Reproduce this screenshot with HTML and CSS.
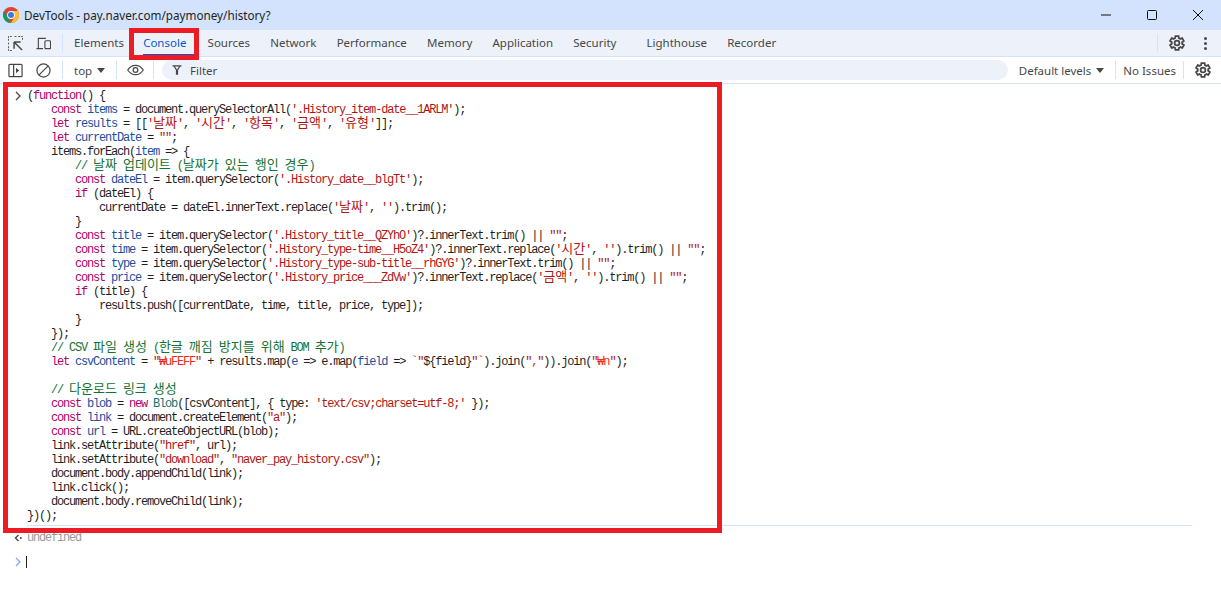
FILE: index.html
```html
<!DOCTYPE html>
<html lang="ko">
<head>
<meta charset="utf-8">
<title>DevTools</title>
<link rel="stylesheet" href="styles.css">
</head>
<body>
<div class="app">
  <header class="titlebar">
    <svg class="logo" viewBox="0 0 16 16"><circle cx="8" cy="8" r="8" fill="#db4437"/><path d="M8 16A8 8 0 0 1 1.07 4l3.46 6L8 16z" fill="#0f9d58"/><path d="M8 16l3.46-6L8 4h6.93A8 8 0 0 1 8 16z" fill="#fbc02d"/><circle cx="8" cy="8" r="3.9" fill="#fff"/><circle cx="8" cy="8" r="3" fill="#3b78e7"/></svg>
    <span class="title">DevTools - pay.naver.com/paymoney/history?</span>
    <div class="winctl">
      <svg viewBox="0 0 10 10"><path d="M0 5h10" stroke="#111" fill="none"/></svg>
      <svg viewBox="0 0 10 10"><rect x=".5" y=".5" width="9" height="9" rx="1" stroke="#111" fill="none"/></svg>
      <svg viewBox="0 0 10 10"><path d="M0 0l10 10M10 0L0 10" stroke="#111" fill="none"/></svg>
    </div>
  </header>

  <nav class="tabbar">
    <span class="ico"><svg viewBox="0 0 16 16" fill="none" stroke="#474747"><path d="M.5 5V.5H5M7 .5h2M11 .5h4.500V5M.5 7v2M.5 11v4.500H5" stroke-dasharray="2 1"/><path d="M6.500 6.500h7M6.500 6.500v7M7 7l8 8" stroke-width="1.600"/></svg></span>
    <span class="ico"><svg viewBox="0 0 16 16" fill="none" stroke="#474747" stroke-width="1.200"><path d="M2.500 13V2.500h8M.5 13.500h7"/><rect x="9.500" y="5" width="6" height="8.500" rx="1"/></svg></span>
    <span class="sep tabsep"></span>
    <span class="tab">Elements</span>
    <span class="tab active">Console</span>
    <span class="tab">Sources</span>
    <span class="tab">Network</span>
    <span class="tab">Performance</span>
    <span class="tab">Memory</span>
    <span class="tab">Application</span>
    <span class="tab wide">Security</span>
    <span class="tab">Lighthouse</span>
    <span class="tab">Recorder</span>
    <span class="grow"></span>
    <span class="sep"></span>
    <span class="ico gearbox"><svg viewBox="3 2 20 20"><path class="gear" d="M19.400 13a7.500 7.500 0 0 0 0-2l2.100-1.600-2-3.500-2.500 1a7.500 7.500 0 0 0-1.700-1L15 3.300h-4l-.4 2.600a7.500 7.500 0 0 0-1.700 1l-2.500-1-2 3.500L6.500 11a7.500 7.500 0 0 0 0 2l-2.100 1.600 2 3.500 2.500-1a7.500 7.500 0 0 0 1.700 1l.4 2.600h4l.4-2.600a7.500 7.500 0 0 0 1.700-1l2.500 1 2-3.500z"/><circle class="gear" cx="13" cy="12" r="3"/></svg></span>
    <span class="dots"><i></i><i></i><i></i></span>
  </nav>

  <div class="toolbar">
    <span class="ico"><svg viewBox="0 0 16 16" fill="none" stroke="#474747" stroke-width="1.300"><rect x="1" y="1.500" width="14" height="13" rx="1"/><path d="M6 1.500v13"/><path d="M8.500 5l3.500 3-3.500 3z" fill="#474747" stroke="none"/></svg></span>
    <span class="ico"><svg viewBox="0 0 16 16" fill="none" stroke="#474747" stroke-width="1.300"><circle cx="8" cy="8" r="7"/><path d="M3 13L13 3"/></svg></span>
    <span class="sep tabsep"></span>
    <span class="ctx">top<b class="caret"></b></span>
    <span class="sep"></span>
    <span class="ico eye"><svg viewBox="0 0 18 12" fill="none" stroke="#474747" stroke-width="1.300"><path d="M.8 6C3 2.500 6 1 9 1s6 1.500 8.200 5C15 9.500 12 11 9 11S3 9.500.8 6z"/><circle cx="9" cy="6" r="2.500"/></svg></span>
    <span class="sep"></span>
    <label class="filter"><svg viewBox="0 0 10 10"><path d="M.5.800h9M2 1l2.500 4v4.200h1V5L8 1" fill="none" stroke="#474747" stroke-width="1.200"/></svg><span>Filter</span></label>
    <span class="levels">Default levels<b class="caret"></b></span>
    <span class="sep"></span>
    <span class="issues">No Issues</span>
    <span class="sep"></span>
    <span class="ico gearbox"><svg viewBox="3 2 20 20"><path class="gear" d="M19.400 13a7.500 7.500 0 0 0 0-2l2.100-1.600-2-3.500-2.500 1a7.500 7.500 0 0 0-1.700-1L15 3.300h-4l-.4 2.600a7.500 7.500 0 0 0-1.700 1l-2.500-1-2 3.500L6.500 11a7.500 7.500 0 0 0 0 2l-2.100 1.600 2 3.500 2.500-1a7.500 7.500 0 0 0 1.700 1l.4 2.600h4l.4-2.600a7.500 7.500 0 0 0 1.700-1l2.500 1 2-3.500z"/><circle class="gear" cx="13" cy="12" r="3"/></svg></span>
  </div>

  <main class="console">
    <div class="msg">
      <svg class="chev" viewBox="0 0 6 10"><path d="M1 1l4 4-4 4" fill="none" stroke="#474747" stroke-width="1.300"/></svg>
      <div class="code"><div class="ln">(<span class="f">function</span>() {</div><div class="ln">    <span class="f">const</span> <span class="v">items</span> = document.querySelectorAll(<span class="s">'.History_item-date__1ARLM'</span>);</div><div class="ln">    <span class="f">let</span> <span class="v">results</span> = [[<span class="s">'<span class="k">날짜</span>'</span>, <span class="s">'<span class="k">시간</span>'</span>, <span class="s">'<span class="k">항목</span>'</span>, <span class="s">'<span class="k">금액</span>'</span>, <span class="s">'<span class="k">유형</span>'</span>]];</div><div class="ln">    <span class="f">let</span> <span class="v">currentDate</span> = <span class="s">""</span>;</div><div class="ln">    items.forEach(<span class="v">item</span> =&gt; {</div><div class="ln">        <span class="c">// <span class="k">날짜</span> <span class="k">업데이트</span> (<span class="k">날짜가</span> <span class="k">있는</span> <span class="k">행인</span> <span class="k">경우</span>)</span></div><div class="ln">        <span class="f">const</span> <span class="v">dateEl</span> = item.querySelector(<span class="s">'.History_date__blgTt'</span>);</div><div class="ln">        <span class="f">if</span> (dateEl) {</div><div class="ln">            currentDate = dateEl.innerText.replace(<span class="s">'<span class="k">날짜</span>'</span>, <span class="s">''</span>).trim();</div><div class="ln">        }</div><div class="ln">        <span class="f">const</span> <span class="v">title</span> = item.querySelector(<span class="s">'.History_title__QZYhO'</span>)?.innerText.trim() || <span class="s">""</span>;</div><div class="ln">        <span class="f">const</span> <span class="v">time</span> = item.querySelector(<span class="s">'.History_type-time__H5oZ4'</span>)?.innerText.replace(<span class="s">'<span class="k">시간</span>'</span>, <span class="s">''</span>).trim() || <span class="s">""</span>;</div><div class="ln">        <span class="f">const</span> <span class="v">type</span> = item.querySelector(<span class="s">'.History_type-sub-title__rhGYG'</span>)?.innerText.trim() || <span class="s">""</span>;</div><div class="ln">        <span class="f">const</span> <span class="v">price</span> = item.querySelector(<span class="s">'.History_price___ZdVw'</span>)?.innerText.replace(<span class="s">'<span class="k">금액</span>'</span>, <span class="s">''</span>).trim() || <span class="s">""</span>;</div><div class="ln">        <span class="f">if</span> (title) {</div><div class="ln">            results.push([currentDate, time, title, price, type]);</div><div class="ln">        }</div><div class="ln">    });</div><div class="ln">    <span class="c">// CSV <span class="k">파일</span> <span class="k">생성</span> (<span class="k">한글</span> <span class="k">깨짐</span> <span class="k">방지를</span> <span class="k">위해</span> BOM <span class="k">추가</span>)</span></div><div class="ln">    <span class="f">let</span> <span class="v">csvContent</span> = <span class="s">"</span><span class="e">₩uFEFF</span><span class="s">"</span> + results.map(<span class="v">e</span> =&gt; e.map(<span class="v">field</span> =&gt; <span class="s">`"</span>${field}<span class="s">"`</span>).join(<span class="s">"</span><span class="e">,</span><span class="s">"</span>)).join(<span class="s">"</span><span class="e">₩n</span><span class="s">"</span>);</div><div class="ln"> </div><div class="ln">    <span class="c">// <span class="k">다운로드</span> <span class="k">링크</span> <span class="k">생성</span></span></div><div class="ln">    <span class="f">const</span> <span class="v">blob</span> = <span class="f">new</span> <span class="g">Blob</span>([csvContent], { type: <span class="s">'text/csv;charset=utf-8;'</span> });</div><div class="ln">    <span class="f">const</span> <span class="v">link</span> = document.createElement(<span class="s">"a"</span>);</div><div class="ln">    <span class="f">const</span> <span class="v">url</span> = URL.createObjectURL(blob);</div><div class="ln">    link.setAttribute(<span class="s">"href"</span>, url);</div><div class="ln">    link.setAttribute(<span class="s">"download"</span>, <span class="s">"naver_pay_history.csv"</span>);</div><div class="ln">    document.body.appendChild(link);</div><div class="ln">    link.click();</div><div class="ln">    document.body.removeChild(link);</div><div class="ln">})();</div></div>
    </div>
    <div class="result">
      <svg class="back" viewBox="0 0 8 8"><path d="M4.500 1L1.500 4l3 3" fill="none" stroke="#474747" stroke-width="1.400"/><circle cx="6.800" cy="4" r="1" fill="#474747"/></svg>
      <span class="undef">undefined</span>
    </div>
    <div class="prompt">
      <svg class="chev" viewBox="0 0 6 10"><path d="M1 1l4 4-4 4" fill="none" stroke="#7cacf8" stroke-width="1.300"/></svg>
      <span class="cursor"></span>
    </div>
  </main>

  <div class="mark mark-tab"></div>
  <div class="mark mark-code"></div>
</div>
</body>
</html>
```
FILE: styles.css
```css
* { box-sizing: border-box; }
html, body { margin: 0; height: 100%; overflow: hidden; }
body { background: #fff; }
.app { position: relative; height: 592px; display: flex; flex-direction: column; background: #fff; font-family: "Noto Sans", "Liberation Sans", sans-serif; font-size: 11.5px; color: #474747; }

.titlebar { height: 30px; background: #d3e3fd; display: flex; align-items: center; padding-left: 3px; color: #1f1f1f; }
.logo { width: 16px; height: 16px; flex: none; }
.title { margin-left: 5px; font-size: 11.7px; white-space: nowrap; }
.winctl { margin-left: auto; display: flex; gap: 36px; padding-right: 18px; }
.winctl svg { width: 10px; height: 10px; display: block; }

.tabbar { height: 27px; background: #edf2fa; border-bottom: 1px solid #d3e3fd; display: flex; align-items: center; padding-left: 8px; }
.toolbar { height: 27px; background: #fff; border-bottom: 1px solid #d3e3fd; display: flex; align-items: center; padding-left: 8px; }
.ico { width: 15px; height: 15px; margin-right: 13px; flex: none; display: block; }
.ico svg { width: 100%; height: 100%; display: block; }
.ico.eye { width: 17px; height: 12px; margin: 0 9px 0 10px; }
.ico.gearbox { width: 16px; height: 16px; margin: 0 10px 0 11px; }
.gear { fill: none; stroke: #474747; stroke-width: 2.200; }
.sep { width: 1px; height: 18px; background: #d3e3fd; flex: none; }
.tabsep { margin-left: -2px; margin-right: 1px; }

.tab { padding: 0 10.1px; line-height: 26px; white-space: nowrap; position: relative; }
.tab.active { color: #0b57d0; margin: 0 1px 0 -1px; }
.tab.active::after { content: ""; position: absolute; left: 10px; right: 3px; bottom: 0; height: 2px; background: #0b57d0; }
.tab.wide { padding-right: 20px; }
.grow { flex: 1; }
.dots { display: flex; flex-direction: column; gap: 2px; margin: 0 14px 0 9px; }
.dots i { width: 3px; height: 3px; border-radius: 50%; background: #474747; display: block; }

.ctx { padding: 0 8px 0 10px; display: flex; align-items: center; gap: 5px; width: 52px; }
.caret { width: 0; height: 0; border: 4px solid transparent; border-top: 5px solid #474747; border-bottom: 0; display: block; flex: none; }
.filter { flex: 1; height: 20px; margin: 0 11px 0 8px; background: #edf2fa; border-radius: 10px; display: flex; align-items: center; padding-left: 10px; gap: 8px; }
.filter svg { width: 10px; height: 10px; }
.levels { display: flex; align-items: center; gap: 5px; padding-right: 11px; white-space: nowrap; }
.issues { padding: 0 7px; white-space: nowrap; }

.console { flex: 1; padding-top: 5px; font-family: "Liberation Mono", "Noto Sans CJK KR", monospace; font-size: 12px; letter-spacing: -1.2px; color: #1f1f1f; }
.msg { display: flex; margin-right: 29px; height: 437px; position: relative; }
.msg::after { content: ""; position: absolute; left: 27px; right: 0; bottom: 0; height: 1px; background: #d3e3fd; }
.chev { width: 6px; height: 10px; margin: 2px 7px 0 15px; flex: none; }
.code { margin-left: -1px; }
.ln { height: 14px; line-height: 14px; white-space: pre; }
.f { color: #b0006a; }
.v { color: #1a4fa0; }
.s { color: #b31412; }
.e { color: #ee2a1c; }
.c { color: #137333; }
.g { color: #0f766e; }
.k { font-family: "Noto Sans CJK KR", sans-serif; font-size: 13px; letter-spacing: 0; line-height: 0; }

.result { display: flex; align-items: center; height: 24px; color: #9a9a9a; }
.back { width: 8px; height: 8px; margin: 0 5px 0 14px; flex: none; }
.prompt { display: flex; align-items: center; height: 24px; }
.prompt .chev { margin-top: 0; margin-right: 5px; }
.cursor { width: 1px; height: 12px; background: #1f1f1f; }

.mark { position: absolute; border: 5px solid #ed1c24; }
.mark-tab { left: 129px; top: 28px; width: 70px; height: 32px; }
.mark-code { left: 3px; top: 82px; width: 719px; height: 451px; }
```
